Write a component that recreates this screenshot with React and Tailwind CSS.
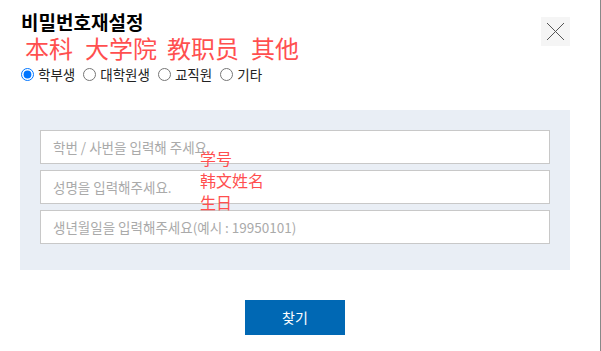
import { useState } from 'react'

const options = ['학부생', '대학원생', '교직원', '기타']

function CloseButton() {
  return (
    <button className="absolute left-[541px] top-[17px] w-[29px] h-[29px] bg-[#f5f5f5] flex items-center justify-center">
      <svg width="19" height="19" viewBox="0 0 19 19">
        <path d="M1 1 L18 18 M18 1 L1 18" stroke="#555" strokeWidth="1" />
      </svg>
    </button>
  )
}

export default function App() {
  const [type, setType] = useState('학부생')

  return (
    <div className="relative w-[601px] h-[351px] bg-white border-r border-[#888] overflow-hidden font-['Noto_Sans_CJK_KR','Noto_Sans',sans-serif]">
      <CloseButton />

      <div className="pl-[21px] pt-[9px]">
        <h1 className="text-[19px] font-bold leading-[26px] text-black">비밀번호재설정</h1>
        {/* annotation */}
        <div className="flex pl-[4px] text-[24px] leading-[26px] text-[#ff4f4f] font-['Noto_Sans_CJK_SC',sans-serif]">
          <span>本科</span>
          <span className="ml-[12px]">大学院</span>
          <span className="ml-[10px]">教职员</span>
          <span className="ml-[12px]">其他</span>
        </div>

        {/* user type */}
        <div className="flex items-center gap-[8px] mt-[3px] text-[13.5px] leading-[20px] text-[#222]">
          {options.map((o) => (
            <label key={o} className="flex items-center gap-[4px]">
              <input
                type="radio"
                name="type"
                checked={type === o}
                onChange={() => setType(o)}
                className="m-0 w-[13px] h-[13px]"
              />
              {o}
            </label>
          ))}
        </div>
      </div>

      {/* form panel */}
      <div className="relative mx-[20px] mt-[26px] w-[550px] h-[160px] bg-[#e9eef5] px-[20px] pt-[20px] flex flex-col gap-[6px]">
        <input
          className="h-[34px] w-full border border-[#c8c8c8] bg-white px-[12px] text-[13.5px] outline-none placeholder:text-[#aaa]"
          placeholder="학번 / 사번을 입력해 주세요."
        />
        <input
          className="h-[34px] w-full border border-[#c8c8c8] bg-white px-[12px] text-[13.5px] outline-none placeholder:text-[#aaa]"
          placeholder="성명을 입력해주세요."
        />
        <input
          className="h-[34px] w-full border border-[#c8c8c8] bg-white px-[12px] text-[13.5px] outline-none placeholder:text-[#aaa]"
          placeholder="생년월일을 입력해주세요(예시 : 19950101)"
        />

        {/* annotation */}
        <div className="absolute left-[180px] top-[37px] text-[16px] leading-[22px] text-[#ff4f4f] font-['Noto_Sans_CJK_SC',sans-serif]">
          <div>学号</div>
          <div>韩文姓名</div>
          <div>生日</div>
        </div>
      </div>

      <div className="w-[590px] flex justify-center mt-[30px]">
        <button className="w-[100px] h-[35px] bg-[#0068b4] text-white text-[14px]">찾기</button>
      </div>
    </div>
  )
}
